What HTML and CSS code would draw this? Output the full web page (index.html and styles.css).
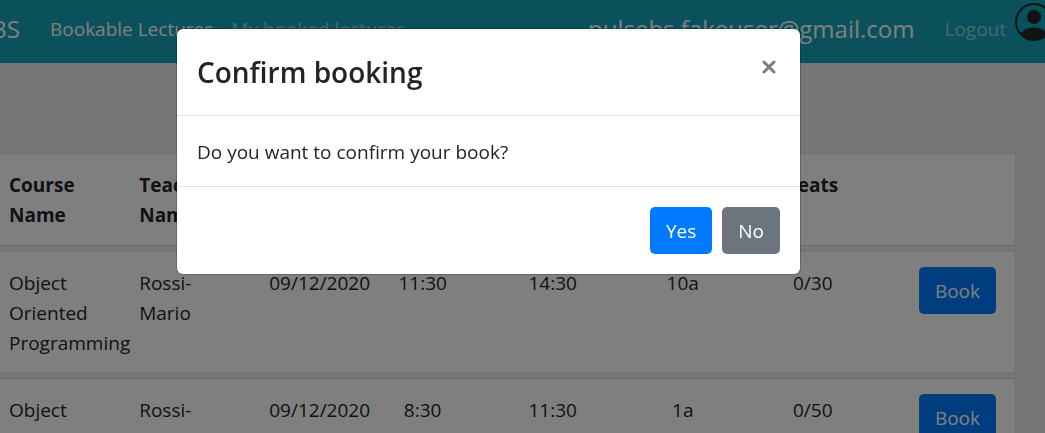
FILE: index.html
```html
<!DOCTYPE html>
<html lang="en">
<head>
<meta charset="utf-8">
<meta name="viewport" content="width=device-width, initial-scale=1">
<title>PulseBS - Bookable Lectures</title>
<link rel="stylesheet" href="styles.css">
</head>
<body class="modal-open">
<header class="navbar">
  <a class="brand" href="#"><span>PulseBS</span></a>
  <nav class="nav">
    <a class="nav-link active" href="#">Bookable Lectures</a>
    <a class="nav-link" href="#">My booked lectures</a>
  </nav>
  <div class="account">
    <span class="email">pulsebs.fakeuser@gmail.com</span>
    <a class="nav-link" href="#">Logout</a>
    <svg class="avatar" viewBox="0 0 38 38" aria-hidden="true">
      <circle cx="19" cy="19" r="18" fill="none" stroke="currentColor" stroke-width="2"/>
      <circle cx="19" cy="14" r="7"/>
      <path d="M6 31C8 27 12 24.500 19 24.500S30 27 32 31A18 18 0 0 1 6 31Z"/>
    </svg>
  </div>
</header>
<main class="page">
  <table class="lectures">
    <colgroup>
      <col class="col-course"><col class="col-teacher"><col class="col-date"><col class="col-info"><col class="col-info"><col class="col-info"><col class="col-info"><col>
    </colgroup>
    <thead>
      <tr><th class="name">Course Name</th><th class="name">Teacher Name</th><th>Date</th><th class="center">Start</th><th class="center">End</th><th class="center">Room</th><th class="center">Seats</th><td></td></tr>
    </thead>
    <tbody>
      <tr><td>Object Oriented Programming</td><td class="name">Rossi-Mario</td><td>09/12/2020</td><td class="center">11:30</td><td class="center">14:30</td><td class="center">10a</td><td class="center">0/30</td><td class="action"><button class="btn btn-primary" type="button">Book</button></td></tr>
      <tr><td>Object Oriented Programming</td><td class="name">Rossi-Mario</td><td>09/12/2020</td><td class="center">8:30</td><td class="center">11:30</td><td class="center">1a</td><td class="center">0/50</td><td class="action"><button class="btn btn-primary" type="button">Book</button></td></tr>
    </tbody>
  </table>
</main>
<div class="backdrop">
  <section class="modal" role="dialog" aria-modal="true" aria-labelledby="modal-title">
    <div class="modal-header">
      <h1 class="modal-title" id="modal-title">Confirm booking</h1>
      <button class="close" type="button" aria-label="Close">
        <svg viewBox="0 0 14 14" aria-hidden="true"><path d="M2 2L12 12M12 2L2 12"/></svg>
      </button>
    </div>
    <div class="modal-body">Do you want to confirm your book?</div>
    <div class="modal-footer">
      <button class="btn btn-primary" type="button">Yes</button>
      <button class="btn btn-secondary" type="button">No</button>
    </div>
  </section>
</div>
</body>
</html>
```
FILE: styles.css
```css
* { box-sizing: border-box; }

body {
  margin: 0;
  background: #e9ecef;
  color: #212529;
  font: 19px/30px "Open Sans", "Noto Sans", sans-serif;
}

.modal-open {
  height: 100vh;
  overflow: hidden;
}

a { text-decoration: none; }

.navbar {
  display: flex;
  align-items: center;
  height: 63px;
  padding-bottom: 6px;
  background: #17a2b8;
  white-space: nowrap;
}

.brand {
  display: flex;
  justify-content: flex-end;
  width: 20px;
  margin-right: 30px;
  color: #fff;
  font-size: 24px;
}

.nav {
  display: flex;
  gap: 18px;
}

.nav-link { color: rgba(255, 255, 255, .5); }
.nav-link.active { color: #fff; }

.account {
  display: flex;
  align-items: center;
  margin-left: auto;
  margin-right: -8px;
}

.email {
  margin-right: 30px;
  color: #fff;
  font-size: 24px;
}

.avatar {
  width: 38px;
  height: 38px;
  margin: 0 0 14px 9px;
  fill: currentColor;
}

.page { padding: 85px 29px 0 0; }

.lectures {
  width: 100%;
  table-layout: fixed;
  border-collapse: separate;
  border-spacing: 0 5px;
}

.lectures th,
.lectures td {
  padding: 16px 0 14px;
  border: solid rgba(0, 0, 0, .125);
  border-width: 1px 0;
  background: #fff;
  text-align: left;
  vertical-align: top;
}

.lectures th { padding-bottom: 15px; }

.lectures th:first-child,
.lectures td:first-child { padding-left: 9px; }

.lectures td:last-child {
  padding-right: 19px;
  border-right-width: 1px;
}

.lectures .name { padding-right: 38px; }
.lectures .center { text-align: center; }

.lectures .action {
  padding-top: 15px;
  text-align: right;
}

.col-course { width: 13.7%; }
.col-teacher { width: 12.8%; }
.col-date { width: 8.7%; }
.col-info { width: 12.8%; }

.btn {
  padding: 9px 15px 8px;
  border: 1px solid transparent;
  border-radius: 5px;
  color: #fff;
  font: inherit;
  line-height: 28px;
  vertical-align: top;
}

.btn-primary { background: #007bff; }
.btn-secondary { background: #6c757d; }

.backdrop {
  position: fixed;
  inset: 0;
  padding: 29px 68px 0 0;
  background: rgba(0, 0, 0, .5);
}

.modal {
  max-width: 623px;
  margin: 0 auto;
  border-radius: 6px;
  background: #fff;
  box-shadow: 0 0 0 1px rgba(0, 0, 0, .2);
}

.modal-header {
  display: flex;
  align-items: flex-start;
  justify-content: space-between;
  padding: 20px;
  border-bottom: 1px solid #dee2e6;
}

.modal-title {
  margin: 0;
  font-size: 28px;
  font-weight: 600;
  line-height: 46px;
}

.close {
  display: flex;
  padding: 11px 4px;
  border: 0;
  background: none;
}

.close svg {
  width: 14px;
  height: 14px;
  fill: none;
  stroke: #7f7f7f;
  stroke-width: 3;
  stroke-linecap: round;
}

.modal-body { padding: 21px 20px 19px; }

.modal-footer {
  display: flex;
  justify-content: flex-end;
  gap: 10px;
  padding: 20px;
  border-top: 1px solid #dee2e6;
}
```
